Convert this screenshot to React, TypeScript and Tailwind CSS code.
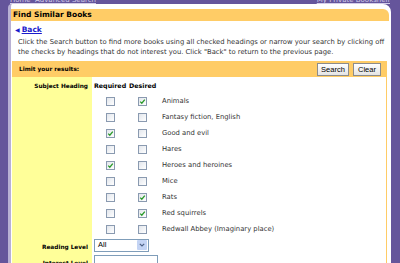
import { useState } from "react";

const headings = [
  { label: "Animals", req: false, des: true },
  { label: "Fantasy fiction, English", req: false, des: false },
  { label: "Good and evil", req: true, des: false },
  { label: "Hares", req: false, des: false },
  { label: "Heroes and heroines", req: true, des: false },
  { label: "Mice", req: false, des: false },
  { label: "Rats", req: false, des: true },
  { label: "Red squirrels", req: false, des: true },
  { label: "Redwall Abbey (Imaginary place)", req: false, des: false },
];

function Check({ checked, onClick }: { checked: boolean; onClick: () => void }) {
  return (
    <button
      onClick={onClick}
      className="flex h-[9px] w-[9px] items-center justify-center border border-[#8a9ab0] bg-gradient-to-br from-[#e2e6ec] to-white"
    >
      {checked && (
        <svg width="7" height="7" viewBox="0 0 7 7">
          <path d="M1.2 3.6 L2.8 5.2 L5.8 1.6" fill="none" stroke="#2a9a2a" strokeWidth="1.3" />
        </svg>
      )}
    </button>
  );
}

export default function App() {
  const [rows, setRows] = useState(headings);

  const toggle = (i: number, key: "req" | "des") =>
    setRows((r) => r.map((row, j) => (j === i ? { ...row, [key]: !row[key] } : row)));

  return (
    <div className="h-[263px] w-[400px] overflow-hidden bg-[#65559b] font-['DejaVu_Sans',Verdana,sans-serif]">
      <div className="flex h-[4px] items-end justify-between overflow-hidden pl-[10px] pr-[10px] text-[7px] leading-[7px] text-[#d4cdea]">
        <span className="underline">Home &nbsp;Advanced Search</span>
        <span className="underline">My Private Bookshelf</span>
      </div>

      <div className="ml-[8px] mr-[9px] h-[259px] rounded-tl-[4px] rounded-tr-[8px] border-l-[3px] border-[#b8b0d4] bg-white pt-[5px] pr-[2px]">
        <div className="flex h-[12px] items-center rounded-tr-[6px] bg-[#ffcc66] pl-[2px] text-[7.5px] font-bold text-black">
          Find Similar Books
        </div>

        <div className="pl-[4px] pt-[4px]">
          <a className="flex h-[9px] items-center gap-[2px] text-[7.5px] font-bold text-[#1a1acc]">
            <span className="text-[6px]">◀</span>
            <span className="underline">Back</span>
          </a>
          <p className="mt-[3px] pl-[3px] text-[6.8px] leading-[10px] text-[#333]">
            Click the Search button to find more books using all checked headings or narrow your search by clicking off
            the checks by headings that do not interest you. Click "Back" to return to the previous page.
          </p>
        </div>

        <div className="mt-[4px] ml-[1px] mr-[2px] border-r border-[#ffcc66]">
          <div className="flex h-[16px] items-center justify-between bg-[#ffcc66] pl-[7px] pr-[5px]">
            <span className="text-[5.8px] font-bold">Limit your results:</span>
            <div className="flex gap-[4px]">
              <button className="h-[13px] w-[32px] border border-[#8c8c8c] bg-gradient-to-b from-white to-[#e4e4e4] text-[7.5px] leading-[11px] font-['Liberation_Sans',Arial,sans-serif]">
                Search
              </button>
              <button className="h-[13px] w-[28px] border border-[#8c8c8c] bg-gradient-to-b from-white to-[#e4e4e4] text-[7.5px] leading-[11px] font-['Liberation_Sans',Arial,sans-serif]">
                Clear
              </button>
            </div>
          </div>

          <div className="flex">
            <div className="flex w-[80px] flex-col bg-[#ffff99] pr-[4px] text-right text-[5.8px] font-bold">
              <div className="flex h-[16px] items-center justify-end pt-[2px]">Subject Heading</div>
              <div className="h-[146px]" />
              <div className="flex h-[16px] items-center justify-end">Reading Level</div>
              <div className="flex h-[16px] items-center justify-end">Interest Level</div>
            </div>
            <div className="flex-1 pl-[2px]">
              <div className="flex h-[16px] items-center pt-[2px] text-[6.3px] font-bold">
                <span className="w-[35px]">Required</span>
                <span>Desired</span>
              </div>
              {rows.map((row, i) => (
                <div key={row.label} className="flex h-[16px] items-center text-[6.8px] text-[#333]">
                  <div className="flex w-[32px] justify-center pl-[1px]">
                    <Check checked={row.req} onClick={() => toggle(i, "req")} />
                  </div>
                  <div className="flex w-[32px] justify-center pl-[1px]">
                    <Check checked={row.des} onClick={() => toggle(i, "des")} />
                  </div>
                  <span className="pl-[4px]">{row.label}</span>
                </div>
              ))}
              <div className="flex h-[16px] items-center">
                <div className="flex h-[13px] w-[55px] items-center justify-between border border-[#7f9db9] bg-white pl-[3px] pr-[1px]">
                  <span className="text-[7.5px] font-['Liberation_Sans',Arial,sans-serif]">All</span>
                  <span className="flex h-[10px] w-[10px] items-center justify-center rounded-[1px] bg-[#c4d4f4]">
                    <svg width="6" height="4" viewBox="0 0 6 4">
                      <path d="M0.8 0.8 L3 3 L5.2 0.8" fill="none" stroke="#4d6185" strokeWidth="1.2" />
                    </svg>
                  </span>
                </div>
              </div>
              <div className="flex h-[16px] items-center">
                <div className="h-[13px] w-[64px] border border-[#7f9db9] bg-white" />
              </div>
            </div>
          </div>
        </div>
      </div>
    </div>
  );
}
